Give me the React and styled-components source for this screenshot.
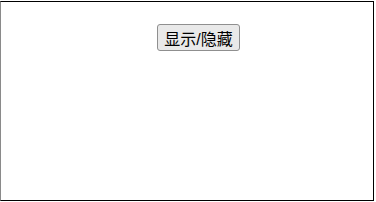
import React from 'react';
import styled, { createGlobalStyle } from 'styled-components';

const GlobalStyle = createGlobalStyle`
  html, body {
    margin: 0;
    padding: 0;
    background: #fff;
  }
  body {
    font-family: "Liberation Sans", "Noto Sans CJK SC", sans-serif;
  }
`;

const Frame = styled.div`
  box-sizing: border-box;
  margin-top: 1px;
  width: 374px;
  height: 200px;
  border: 1px solid #000;
  border-left-color: #8a8a8a;
  box-shadow: 0 1px 0 #9a9a9a;
  display: flex;
  justify-content: center;
  padding: 22px 0 0 23px;
`;

const ToggleButton = styled.button`
  box-sizing: border-box;
  height: 27px;
  padding: 0 6px;
  font-family: "Liberation Sans", "Noto Sans CJK SC", sans-serif;
  font-size: 16px;
  color: #000;
  background: #e9e9e9;
  border: 1px solid #8f8f8f;
  border-radius: 3px;
  cursor: pointer;
`;

const App = () => {
  const [visible, setVisible] = React.useState(true);

  return (
    <>
      <GlobalStyle />
      <Frame>
        <div>
          <ToggleButton type="button" onClick={() => setVisible(v => !v)}>
            显示/隐藏
          </ToggleButton>
        </div>
      </Frame>
    </>
  );
};

export default App;
